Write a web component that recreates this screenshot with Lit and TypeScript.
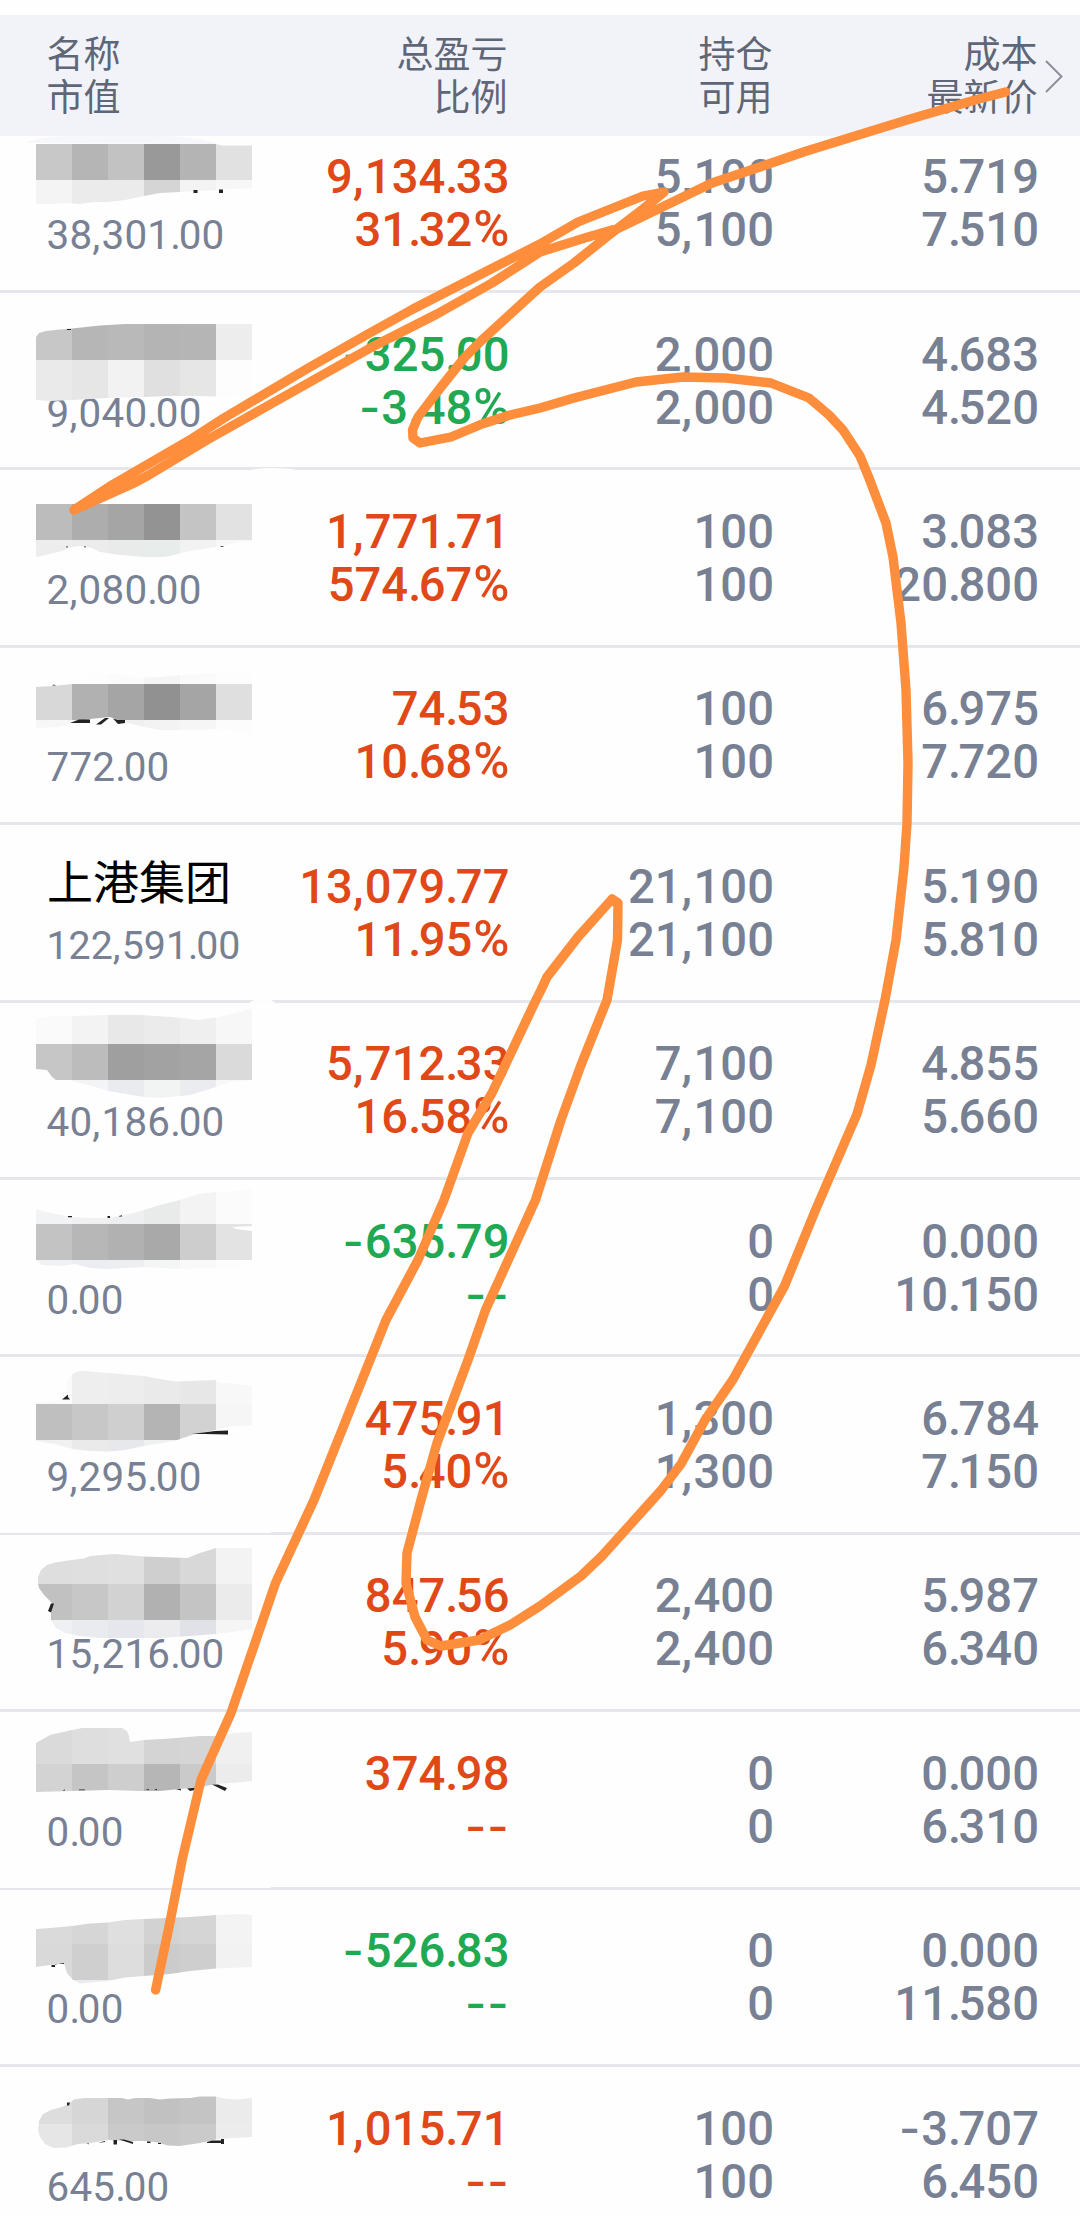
import { LitElement, html, css, svg } from "lit";
import { customElement, property } from "lit/decorators.js";
import { classMap } from "lit/directives/class-map.js";

interface Holding {
  name: string;
  value: string;
  profit: string;
  ratio: string;
  held: string;
  usable: string;
  cost: string;
  price: string;
}

const h = (
  name: string, value: string, profit: string, ratio: string,
  held: string, usable: string, cost: string, price: string,
): Holding => ({ name, value, profit, ratio, held, usable, cost, price });

const HOLDINGS: Holding[] = [
  h("", "38,301.00", "9,134.33", "31.32%", "5,100", "5,100", "5.719", "7.510"),
  h("", "9,040.00", "-325.00", "-3.48%", "2,000", "2,000", "4.683", "4.520"),
  h("", "2,080.00", "1,771.71", "574.67%", "100", "100", "3.083", "20.800"),
  h("", "772.00", "74.53", "10.68%", "100", "100", "6.975", "7.720"),
  h("上港集团", "122,591.00", "13,079.77", "11.95%", "21,100", "21,100", "5.190", "5.810"),
  h("", "40,186.00", "5,712.33", "16.58%", "7,100", "7,100", "4.855", "5.660"),
  h("", "0.00", "-635.79", "--", "0", "0", "0.000", "10.150"),
  h("", "9,295.00", "475.91", "5.40%", "1,300", "1,300", "6.784", "7.150"),
  h("", "15,216.00", "847.56", "5.90%", "2,400", "2,400", "5.987", "6.340"),
  h("", "0.00", "374.98", "--", "0", "0", "0.000", "6.310"),
  h("", "0.00", "-526.83", "--", "0", "0", "0.000", "11.580"),
  h("", "645.00", "1,015.71", "--", "100", "100", "-3.707", "6.450"),
];

/* A mosaic smudge: rows of 36px tiles clipped to a brushed outline. */
interface Smudge {
  outline: string;
  bands: { y: number; height: number; tones: string[] }[];
  marks?: string;
}

const SMUDGES: Smudge[] = [
  {
    outline: "36,144 216,144 222,145.500 252,145.500 252,188 216,190 180,192 160,193 144,196 125,200 108,202 94,202 80,204 68,203 50,204 36,204",
    bands: [
      { y: 144, height: 36, tones: ["c8c8c8", "b5b5b5", "c2c2c2", "999999", "b4b4b4", "e1e1e1"] },
      { y: 180, height: 26, tones: ["f4f4f4", "ebebeb", "ebebeb", "d5d5d5", "f3f3f3", "f7f7f7"] },
    ],
    marks: "M193.500 190h4v3h-4z M219 189.500h4v3.500h-4z",
  },
  {
    outline: "36,337 39,333 46,331 60,329.500 72,328.500 100,325.500 125,324 252,324 252,396 216,396.500 200,396 170,396 144,397 108,398 72,400 50,401 36,400",
    bands: [
      { y: 324, height: 36, tones: ["c7c7c7", "b6b6b6", "b9b9b9", "b4b4b4", "b5b5b5", "ededed"] },
      { y: 360, height: 42, tones: ["eaeaea", "e6e6e6", "f2f2f2", "e0e0e0", "e6e6e6", "fdfdfd"] },
    ],
    marks: "M67 329h4v1h-4z",
  },
  {
    outline: "36,504 252,504 252,541 240,542 216,547 190,551 165,557 144,557 120,555 100,552 92,548 80,546 72,547 62,551 50,554 36,557",
    bands: [
      { y: 504, height: 36, tones: ["bcbcbc", "adadad", "a5a5a5", "939393", "c4c4c4", "e2e2e2"] },
      { y: 540, height: 18, tones: ["ededed", "ececed", "e9ebea", "e8ecea", "f2f2f2", "f8f8f8"] },
    ],
    marks: "M66 546.500h2v.7h-2z M84 546.500h2v.7h-2z M220.500 546h3v.8h-3z",
  },
  {
    outline: "36,687 52,686 72,684 84,680 88,675 95,673.500 115,674 140,678 160,677 180,675 216,673 240,672 252,673 252,734 240,733 230,730 216,729 200,730 180,730 160,730 144,727 124,722 110,717 90,719 72,723 58,727 36,728",
    bands: [
      { y: 670, height: 14, tones: ["ffffff", "fdfdfd", "fbfbfb", "f5f5f5", "fafafa", "fdfdfd"] },
      { y: 684, height: 36, tones: ["d8d8d8", "b1b1b1", "a5a5a5", "919191", "a5a5a5", "dfdfdf"] },
      { y: 720, height: 15, tones: ["f7f7f8", "f3f5f8", "f0f0f0", "f3f3f3", "f6f6f6", "fcfcfc"] },
    ],
    marks: "M70 723L79 719.500H90V723Z M96 724.500L105 718H109L101 724.500Z M113 718.500L118 720H125V723L118 724Z M52 685.500l2-1 2 1z",
  },
  {
    outline: "36,1018 50,1016.500 72,1016 108,1015 140,1015 172,1017 186,1018.500 198,1020 216,1017.500 240,1012 252,1008 252,1080 230,1082 216,1087 190,1095 160,1098 144,1097 108,1091 85,1084 72,1081 56,1080 52,1077 47,1070 36,1069",
    bands: [
      { y: 1008, height: 36, tones: ["fafafa", "f3f3f3", "e8e8e8", "ebebeb", "efefef", "f7f7f7"] },
      { y: 1044, height: 36, tones: ["c6c6c6", "bcbcbc", "9f9f9f", "a2a2a2", "a5a5a5", "dadada"] },
      { y: 1080, height: 20, tones: ["ffffff", "f3f4f5", "e9ebee", "f2f4f3", "eaecef", "f8f8f8"] },
    ],
  },
  {
    outline: "36,1209 50,1213 72,1217 90,1218 108,1218 130,1214 160,1205 180,1200 198,1194 216,1192 252,1190 252,1226 232,1227 236,1229 252,1231 252,1263 240,1266 216,1268 180,1269 144,1267 108,1269 90,1268 75,1264 60,1266 42,1265 36,1260",
    bands: [
      { y: 1188, height: 36, tones: ["f2f3f4", "f1f1f1", "eeeff0", "e8ebe9", "f3f3f3", "fbfbfb"] },
      { y: 1224, height: 36, tones: ["c3c3c3", "b7b7b7", "b1b1b1", "a9a9a9", "cdcdcd", "e3e3e3"] },
      { y: 1260, height: 12, tones: ["eff1f4", "ebedf0", "eceef0", "f4f5f5", "f9f9f9", "fcfcfc"] },
    ],
    marks: "M68 1216h4v1.300h-4z M107.500 1216h2.500v2h-2.500z M119 1216l3-.8v1.300h-3z",
  },
  {
    outline: "36,1402 62,1400 66,1395 67,1383 71,1375 77,1371.500 85,1371 108,1373 144,1376 160,1379 175,1381.500 190,1381 216,1380 218,1382 252,1386 252,1425 228,1427 216,1430 195,1434 180,1439 175,1441 144,1446 125,1450 108,1451.500 90,1451 72,1449 55,1444 36,1441",
    bands: [
      { y: 1370, height: 34, tones: ["fafafa", "eeeeee", "ededed", "eaeaea", "e7e7e7", "f8f8f8"] },
      { y: 1404, height: 36, tones: ["bfbfbf", "c7c7c7", "cfcfcf", "b4b4b4", "d2d2d2", "f6f6f6"] },
      { y: 1440, height: 14, tones: ["f1f1f2", "eaeaeb", "e7e8ec", "f0f1f1", "f8f8f8", "ffffff"] },
    ],
    marks: "M192 1434L215 1431L228 1430.500V1434.500L205 1434Z M62 1399.500L68 1394.500V1397L70 1399.500Z",
  },
  {
    outline: "38,1584 38,1577 41,1570 47,1565 55,1562.500 72,1560 84,1558.500 90,1556 115,1554 144,1556.500 187,1558 200,1553 216,1548 252,1548 252,1629 232,1632 216,1634 190,1636 160,1638 130,1638 100,1638 80,1636 65,1633 56,1628 51,1620 51,1610 52,1603 44,1595 39,1588",
    bands: [
      { y: 1548, height: 36, tones: ["dedede", "dfdfdf", "e0e0e0", "cfcfcf", "d8d8d8", "f3f3f3"] },
      { y: 1584, height: 36, tones: ["c1c1c1", "c7c7c7", "d2d2d2", "b1b1b1", "c4c4c4", "ebebeb"] },
      { y: 1620, height: 20, tones: ["eff0f3", "eaebee", "e5e7ec", "ececee", "e0e2e7", "f5f5f5"] },
    ],
    marks: "M48 1611L51 1603.500H54L51 1612.500Z",
  },
  {
    outline: "36,1743 50,1735 72,1730 82,1728 122,1728 127,1731 129,1736 130,1742 144,1740 170,1738.500 200,1736 216,1736 234,1733 252,1732 252,1781 232,1783 216,1784 200,1787 180,1789 160,1791 140,1791 108,1790 72,1791 36,1792",
    bands: [
      { y: 1728, height: 36, tones: ["dadada", "dedede", "e0e0e0", "d4d4d4", "d5d5d5", "f0f0f0"] },
      { y: 1764, height: 30, tones: ["d3d3d3", "c5c5c5", "cecece", "b6b6b6", "cacaca", "ececec"] },
    ],
    marks: "M187 1788.500L202 1787V1788.500L190 1791Z M212 1784.500L218 1784.500L227 1788L225 1791Z M62 1790.500l3-1v1z M79 1789.500h6v.8h-6z M145 1789.500l4-.5v1z M154 1789h3v1.200z M176 1789h5v1.500z",
  },
  {
    outline: "36,1929 50,1928 72,1926 90,1923.500 108,1922.500 125,1920 144,1919 190,1917 216,1915 238,1914 252,1915 252,1967 216,1968.500 190,1971 170,1974 144,1976 125,1977.500 108,1981 80,1983.500 73,1980 67,1973 64,1963 50,1965 36,1967",
    bands: [
      { y: 1908, height: 36, tones: ["dadada", "d6d6d6", "dfdfdf", "d2d2d2", "d5d5d5", "f3f3f3"] },
      { y: 1944, height: 36, tones: ["d9d9d9", "cfcfcf", "dddddd", "cbcbcb", "cecece", "f2f2f2"] },
      { y: 1980, height: 6, tones: ["ffffff", "ececf0", "f0f0f4", "ffffff", "ffffff", "ffffff"] },
    ],
    marks: "M51.500 1965h3.500v2h-3.500z M55 1964.500L64 1963v1h-9z",
  },
  {
    outline: "38,2130 39,2121 43,2114 51,2110 62,2107 68,2104 74,2099.500 84,2098 122,2098 128,2099.500 135,2098 150,2098 160,2099.500 170,2098.500 190,2098 200,2096.500 216,2096.500 224,2098.500 238,2099.500 252,2098 252,2137 232,2138 216,2139.500 200,2143 180,2146 168,2145.500 155,2142 144,2141 125,2141 108,2140 90,2143 78,2144 66,2147.500 54,2148 45,2144 40,2137",
    bands: [
      { y: 2090, height: 34, tones: ["dddddd", "d6d6d6", "c6c6c6", "c1c1c1", "c4c4c4", "ebebeb"] },
      { y: 2124, height: 26, tones: ["e6e6e6", "dadada", "cacaca", "c7c7c7", "cacaca", "ececec"] },
    ],
    marks: "M113.500 2140h3.500v4.500h-3.500z M119 2139.500H124L133 2142V2144Z M147 2141.500h3.500v1.500h-3.500z M158 2143h3v1h-3z M207 2142L212 2140.500H221V2139H224V2144H221V2143H207Z M67 2102.500h3l-1 3h-2z M98 2143l7-2v1z M86 2143.500h3v.8z",
  },
];

const STROKE =
  "1005.600,92 975,100 908.500,119.500 805,151.500 757,168 712,183 684,196.500 650,213 619,228 588,237 540,252 492,283 437,314 372,347 310,382 262,409 207,440 148,475.500 132,484 74,510 " +
  "112,485 193,438 224,418 310,367 368,334 413,309 489,270 540,244 578,222 643,196 664,192 643,209 609,235 574,263 540,287 482,340 465,357 441,387 418,417 412.500,430 413,438 420,443 " +
  "451,437 482,424 510,415 540,408 574,398 636,382 683,377 726,378 771,383 809,398 829,415 843,430 860,456 869,478 886,523 893,557 901,623 906,690 908,763 907,823 904,867 896,940 885,1000 " +
  "871,1065 857,1114 815.500,1210 784.500,1286 733,1379.500 705,1420 681,1464 660.500,1491 602,1556 581,1576 540,1606 510,1625 479,1640 441,1646 427,1640 415,1617 406,1583 407,1553 421,1500 " +
  "437,1443 468,1360 485.500,1310 535.500,1200 561,1120 581,1065 607,1000 617.500,940 618,903 612,899 604,908 578,937 547,977 541,990 535,1002 492,1093 468,1133 444,1200 418,1260 386,1320 334,1450 314,1500 " +
  "275.500,1583 255,1643 231,1713 201,1780 182.500,1858 169,1927 155.600,1990";

const SYMBOLS: Record<string, string> = { "-": "dash", ".": "point", ",": "comma", "%": "percent" };

@customElement("figure-text")
export class FigureText extends LitElement {
  static styles = css`
    :host { display: block; white-space: nowrap; }
    .dash {
      font-family: Inter, sans-serif;
      font-size: 46px;
      font-weight: 500;
      line-height: 1px;
      letter-spacing: 1px;
    }
    .point { letter-spacing: -0.055em; }
    .comma { letter-spacing: 0.03em; }
    .percent { font-size: 1.040em; line-height: 1px; margin-left: 1px; }
  `;
  @property() text = "";
  render() {
    return [...this.text].map((c) => (SYMBOLS[c] ? html`<span class=${SYMBOLS[c]}>${c}</span>` : c));
  }
}

@customElement("holding-row")
export class HoldingRow extends LitElement {
  static styles = css`
    :host {
      display: block;
      box-sizing: border-box;
      height: 177.4px;
      padding-top: 35.600px;
      border-bottom: 3px solid #e5e7eb;
    }
    .row {
      display: grid;
      grid-template-columns: 280px 182.500px 264.500px 265px;
      padding-left: 47px;
      font: 500 47.2px/53px Roboto, sans-serif;
      color: #788093;
    }
    .name {
      height: 44px;
      margin-top: -4px;
      font: 400 46px/44px "Noto Sans CJK SC", sans-serif;
      color: #000;
      white-space: nowrap;
    }
    .value {
      font: 400 40.400px/50px Roboto, sans-serif;
      letter-spacing: 0.2px;
      padding-top: 20px;
      margin-left: -0.5px;
    }
    .value.long { font-size: 39.300px; letter-spacing: 0; }
    .num {
      display: flex;
      flex-direction: column;
      align-items: flex-end;
    }
    .up { color: #e04818; }
    .down { color: #20a852; }
  `;
  @property({ attribute: false }) item!: Holding;
  render() {
    const i = this.item;
    const down = i.profit.startsWith("-");
    return html`<div class="row">
      <div>
        <div class="name">${i.name}</div>
        <figure-text class=${classMap({ value: true, long: i.value.length > 9 })} .text=${i.value}></figure-text>
      </div>
      <div class=${classMap({ num: true, up: !down, down })}>
        <figure-text .text=${i.profit}></figure-text>
        <figure-text .text=${i.ratio}></figure-text>
      </div>
      <div class="num">
        <figure-text .text=${i.held}></figure-text>
        <figure-text .text=${i.usable}></figure-text>
      </div>
      <div class="num">
        <figure-text .text=${i.cost}></figure-text>
        <figure-text .text=${i.price}></figure-text>
      </div>
    </div>`;
  }
}

@customElement("app-root")
export class AppRoot extends LitElement {
  static styles = css`
    :host {
      display: block;
      position: relative;
      width: 1080px;
      height: 2216px;
      overflow: hidden;
      background: #fefefe;
    }
    .head {
      display: grid;
      grid-template-columns: 279px 182px 265px 265px 1fr;
      box-sizing: border-box;
      height: 121px;
      margin-top: 15px;
      padding: 16px 0 0 46.500px;
      background: #f2f3f8;
      color: #5f6678;
      font: 400 37px/43px "Noto Sans CJK SC", sans-serif;
    }
    .page { display: flow-root; }
    .right { text-align: right; }
    .chevron { margin: 28px 0 0 6px; display: block; }
    .rows { height: 2080px; overflow: hidden; }
    .list { margin-top: -20.400px; }
    .markup {
      position: absolute;
      inset: 0;
      width: 1080px;
      height: 2216px;
      pointer-events: none;
    }
  `;

  private smudge(s: Smudge, i: number) {
    return svg`
      <clipPath id="smudge-${i}"><polygon points=${s.outline}></polygon></clipPath>
      <g clip-path="url(#smudge-${i})">
        ${s.bands.map((b) => b.tones.map((t, c) => svg`
          <rect x=${36 + c * 36} y=${b.y} width="36" height=${b.height} fill="#${t}"></rect>`))}
      </g>
      <path d=${s.marks ?? ""} fill="#222"></path>`;
  }

  render() {
    return html`<div class="page">
      <div class="head">
        <div>名称<br />市值</div>
        <div class="right">总盈亏<br />比例</div>
        <div class="right">持仓<br />可用</div>
        <div class="right">成本<br />最新价</div>
        <svg class="chevron" width="20" height="36" viewBox="0 0 20 36" fill="none" stroke="#8b909e" stroke-width="2">
          <path d="M2 2L17.500 17.500L2 33"></path>
        </svg>
      </div>
      <div class="rows"><div class="list">
        ${HOLDINGS.map((item) => html`<holding-row .item=${item}></holding-row>`)}
      </div></div>
      <svg class="markup" viewBox="0 0 1080 2216">
        <path d="M26 143Q40 136 75 136H170Q200 138 220 144Z" fill="#f6f7fa"></path>
        <path d="M252 470V469.500Q260 468 272 468Q286 468 294 469.500V470Z M250 1003Q252 999 262 999Q273 999 275 1003Z M0 1532H271V1533H0Z M0 1887H271V1888H0Z" fill="#fdfdfd"></path>
        ${SMUDGES.map((s, i) => this.smudge(s, i))}
        <polyline points=${STROKE} fill="none" stroke="#fe8d3c" stroke-width="9.400" stroke-linecap="round" stroke-linejoin="round"></polyline>
      </svg>
    </div>`;
  }
}
